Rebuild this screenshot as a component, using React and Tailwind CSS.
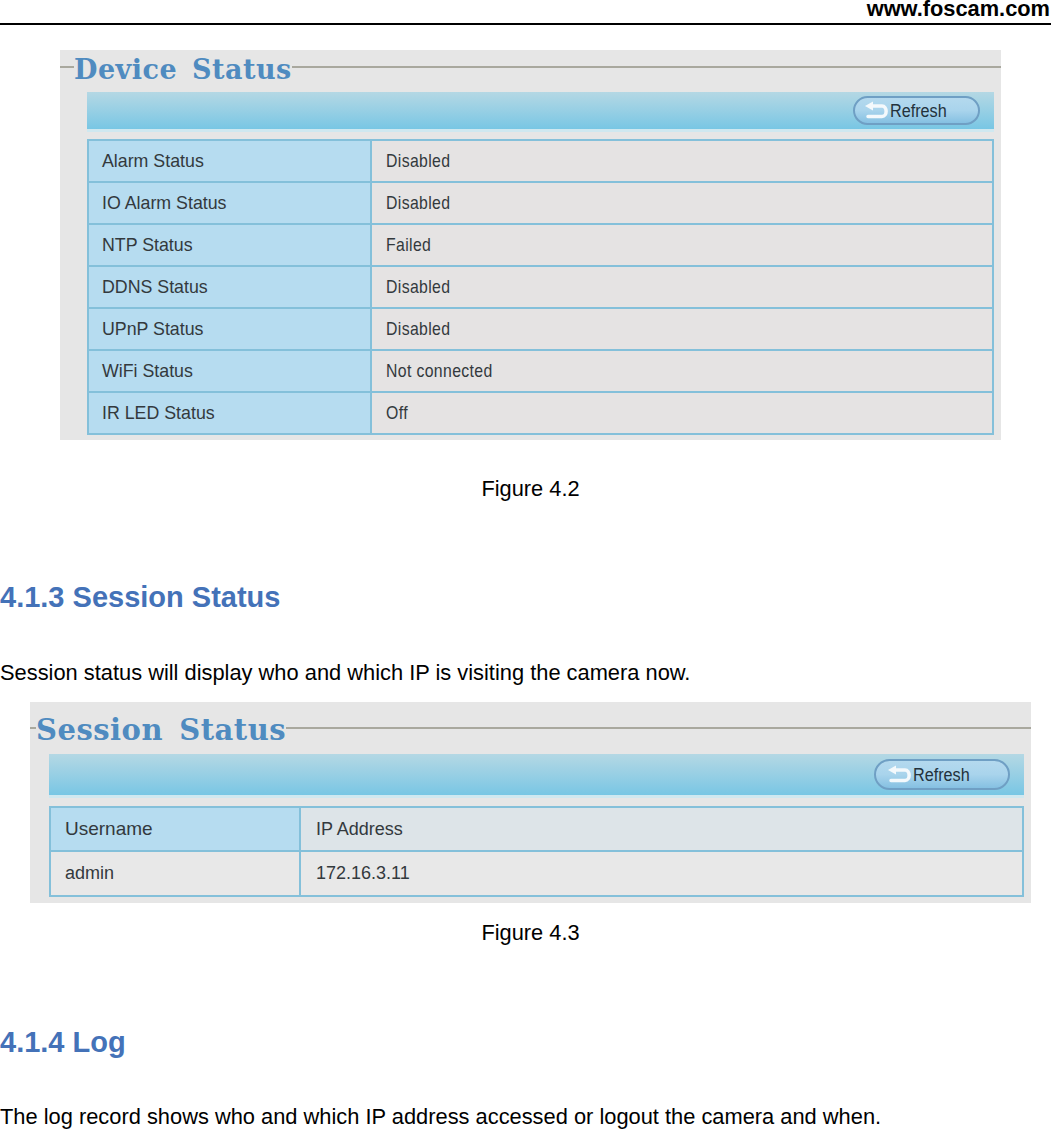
const deviceRows = [
  ["Alarm Status", "Disabled"],
  ["IO Alarm Status", "Disabled"],
  ["NTP Status", "Failed"],
  ["DDNS Status", "Disabled"],
  ["UPnP Status", "Disabled"],
  ["WiFi Status", "Not connected"],
  ["IR LED Status", "Off"],
];

function RefreshButton({ size, pad }) {
  return (
    <div className={`flex items-center rounded-full border-2 border-[#6f9fc4] bg-gradient-to-b from-[#b4d9ee] via-[#a9d4ec] to-[#85c0e2] ${size} ${pad}`}>
      <svg width="28" height="20" viewBox="0 0 28 20" fill="none" className="shrink-0">
        <path d="M9 5 H20 C25.5 5 25.5 15.5 20 15.5 H6" stroke="#f4f9fc" strokeWidth="3.5" strokeLinecap="round" />
        <path d="M11 0.5 L3 5 L11 9.5 Z" fill="#f4f9fc" />
      </svg>
      <span className="text-[18px] leading-none text-[#23323c] font-['Liberation_Sans',sans-serif] scale-x-[0.9] origin-left">Refresh</span>
    </div>
  );
}

function Legend({ title, dash, text }) {
  return (
    <div className="flex h-[32px] items-center">
      <div className={`h-[2px] bg-[#a9a89e] ${dash}`} />
      <span className={`font-['DejaVu_Serif',serif] font-bold text-[#4f8bc0] leading-none whitespace-pre translate-y-[2px] ${text}`}>{title}</span>
      <div className="h-[2px] flex-1 bg-[#a9a89e]" />
    </div>
  );
}

function DevicePanel() {
  return (
    <div className="ml-[60px] mt-[25px] h-[390px] w-[941px] bg-[#e6e6e6] pt-[1px]">
      <Legend title="Device  Status" dash="w-[14px]" text="text-[27px] tracking-[0.5px] [word-spacing:-2.5px]" />
      <div className="ml-[27px] mr-[7px] mt-[9px]">
        <div className="flex h-[37px] items-center justify-end bg-gradient-to-b from-[#b4d8e4] to-[#78c6e4] pr-[14px]">
          <RefreshButton size="h-[29px] w-[127px]" pad="pl-[7px]" />
        </div>
        <div className="h-[3px] bg-[#cfe8f0]" />
        <div className="mt-[7px] border-t-2 border-[#84c0da]">
          {deviceRows.map(([label, value]) => (
            <div key={label} className="flex h-[42px] border-b-2 border-x-2 border-[#84c0da] text-[17.8px] font-['Liberation_Sans',sans-serif] text-[#33393d]">
              <div className="flex w-[283px] items-center border-r-2 border-[#84c0da] bg-[#b6dcf0] pl-[13px]">
                <span className="whitespace-nowrap">{label}</span>
              </div>
              <div className="flex flex-1 items-center bg-[#e5e3e3] pl-[14px]">
                <span className="scale-x-[0.89] origin-left whitespace-nowrap tracking-[0.4px]">{value}</span>
              </div>
            </div>
          ))}
        </div>
      </div>
    </div>
  );
}

function SessionPanel() {
  return (
    <div className="ml-[30px] mt-[16px] h-[201px] w-[1001px] bg-[#e6e6e6] pt-[10px]">
      <Legend title="Session  Status" dash="w-[6px]" text="text-[29px] tracking-[0.5px] [word-spacing:-2.5px]" />
      <div className="ml-[19px] mr-[7px] mt-[10px]">
        <div className="flex h-[41px] items-center justify-end bg-gradient-to-b from-[#b4d8e4] to-[#78c6e4] pr-[14px]">
          <RefreshButton size="h-[31px] w-[136px]" pad="pl-[9px]" />
        </div>
        <div className="h-[3px] bg-[#cfe8f0]" />
        <div className="mt-[8px] border-t-2 border-[#84c0da] text-[18px] font-['Liberation_Sans',sans-serif] text-[#33393d]">
          <div className="flex h-[44px] border-b-2 border-x-2 border-[#84c0da]">
            <div className="flex w-[250px] items-center border-r-2 border-[#84c0da] bg-[#b6dcf0] pl-[14px] text-[19px]">Username</div>
            <div className="flex flex-1 items-center bg-[#dde4e8] pl-[15px]">IP Address</div>
          </div>
          <div className="flex h-[45px] border-b-2 border-x-2 border-[#84c0da]">
            <div className="flex w-[250px] items-center border-r-2 border-[#84c0da] bg-[#e8e8e8] pl-[14px]">admin</div>
            <div className="flex flex-1 items-center bg-[#e8e8e8] pl-[15px]">172.16.3.11</div>
          </div>
        </div>
      </div>
    </div>
  );
}

export default function App() {
  return (
    <div className="h-[1129px] w-[1051px] overflow-hidden bg-white font-['Liberation_Sans',sans-serif] text-black">
      <div className="h-[25px] border-b-2 border-black pr-[1px] text-right text-[21.8px] font-bold leading-[18px]">www.foscam.com</div>
      <DevicePanel />
      <p className="mt-[36px] pl-[10px] text-center text-[21.8px] leading-[26px]">Figure 4.2</p>
      <h2 className="mt-[79px] text-[29px] font-bold leading-[32px] text-[#4472b8]">4.1.3 Session Status</h2>
      <p className="mt-[47px] text-[21.85px] leading-[26px]">Session status will display who and which IP is visiting the camera now.</p>
      <SessionPanel />
      <p className="mt-[17px] pl-[10px] text-center text-[21.8px] leading-[26px]">Figure 4.3</p>
      <h2 className="mt-[80px] text-[29px] font-bold leading-[32px] text-[#4472b8]">4.1.4 Log</h2>
      <p className="mt-[46px] text-[21.85px] leading-[26px]">The log record shows who and which IP address accessed or logout the camera and when.</p>
    </div>
  );
}
